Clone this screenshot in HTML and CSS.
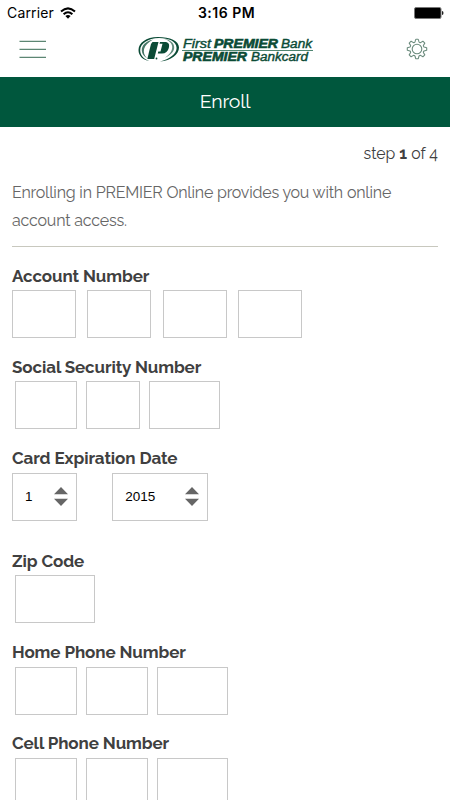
FILE: index.html
```html
<!DOCTYPE html>
<html lang="en">
<head>
<meta charset="utf-8">
<title>Enroll</title>
<link rel="stylesheet" href="styles.css">
</head>
<body>
<div class="status">
  <div class="carrier"><span class="carrier-name">Carrier</span>
    <svg width="16" height="12" viewBox="0 0 16 12"><g fill="none" stroke="#000" stroke-width="2"><path d="M1 4.600Q8-1.800 15 4.600M3.600 7.300Q8 3.200 12.400 7.300"/></g><path d="M5.400 9Q8 6.800 10.600 9L8 11.700z"/></svg>
  </div>
  <div class="time">3:16 PM</div>
  <svg class="battery" width="30" height="12" viewBox="0 0 30 12"><rect x=".5" y=".5" width="26.500" height="11" rx="1.500" fill="#000" stroke="#777"/><path d="M28 4q1.500 0 1.500 2T28 8z" fill="#222"/></svg>
</div>
<header class="header">
  <svg class="menu" width="28" height="18" viewBox="0 0 28 18"><path d="M.5 1.300h26.500M.5 9.300h26.500M.5 17.300h26.500" stroke="#5c8673" stroke-width="1.200"/></svg>
  <svg class="logo" width="176" height="28" viewBox="0 0 176 28">
    <g fill="#0b4b36">
      <path d="M20 1C8 1 .5 7 .5 14 .5 20 5 24 11.500 25 6 23 2.200 19.500 2.200 14.200 2.200 7.500 10 2 21 1.900 31 1.900 38.600 5.500 38.600 12 38.600 18 31.500 23 22 25.500 33 24.500 41 18.500 41 11.500 41 5 32 1 20 1z"/>
      <path d="M15 3.500C7.500 5.300 3.600 9.500 3.800 14.500c.2 3.500 2.200 6 5.200 7.800C3.500 16.500 5 9 15 3.500z" opacity=".75"/>
      <path d="M26 2.800c6 1 10 4 10.200 8.200.2 4.500-3.500 8-9.200 10.800 4.500-3.200 7.200-6.600 7.200-10.800 0-3.600-3-6.500-8.200-8.200z" opacity=".65"/>
      <path d="M14.500 6h6L16.200 23H9.300L13 8z"/>
      <path d="M22 6h4.500c4.500 0 5.200 2.600 4.300 6s-3.200 5.600-6.800 5.600h-4.200l.5-2h2.200l2-7.800h-3z"/>
      <circle cx="18.500" cy="22.500" r=".9"/>
    </g>
    <path d="M44 14.500h131" stroke="#4f8571" stroke-width="1"/>
    <g class="wordmark">
      <text x="45" y="11.800" textLength="28" lengthAdjust="spacingAndGlyphs">First</text>
      <text class="heavy" x="76" y="11.800" textLength="64" lengthAdjust="spacingAndGlyphs">PREMIER</text>
      <text x="143" y="11.800" textLength="31" lengthAdjust="spacingAndGlyphs">Bank</text>
      <text class="heavy" x="45" y="25" textLength="64" lengthAdjust="spacingAndGlyphs">PREMIER</text>
      <text x="113" y="25" textLength="57" lengthAdjust="spacingAndGlyphs">Bankcard</text>
    </g>
  </svg>
  <svg class="gear" width="22" height="22" viewBox="-11 -11 22 22"><g fill="none" stroke="#6b8b7d" stroke-width="1.100" stroke-linejoin="round"><path d="M-2-7Q-1.500-9.700-1.100-9.700H1.100Q1.500-9.700 2-7Q2.700-6.200 3.540-6.360L5.900-7.800 7.800-5.900 6.360-3.540Q6.200-2.700 7-2L9.700-1.300V1.300L7 2Q6.200 2.700 6.360 3.540L7.800 5.900 5.900 7.800 3.540 6.360Q2.700 6.200 2 7L1.300 9.700H-1.300L-2 7Q-2.700 6.200-3.540 6.360L-5.900 7.800-7.800 5.900-6.360 3.540Q-6.200 2.700-7 2L-9.700 1.300V-1.300L-7-2Q-6.200-2.700-6.360-3.540L-7.800-5.900-5.900-7.800-3.540-6.360Q-2.700-6.200-2-7z"/><circle r="4.800"/></g></svg>
</header>
<h1 class="title">Enroll</h1>
<main class="content">
  <p class="step">step <b>1</b> of 4</p>
  <p class="intro">Enrolling in PREMIER Online provides you with online<br>account access.</p>
  <form class="form">
    <div class="field"><div class="label">Account Number</div>
      <div class="boxes wide-gap"><input class="w64"><input class="w64"><input class="w64"><input class="w64"></div></div>
    <div class="field"><div class="label">Social Security Number</div>
      <div class="boxes inset"><input class="w62"><input class="w54"><input class="w71"></div></div>
    <div class="field expiry"><div class="label">Card Expiration Date</div>
      <div class="boxes select-gap">
        <div class="select month"><span>1</span><svg width="14" height="19" viewBox="0 0 14 19"><path d="M0 7.300L7 0l7 7.300zM0 11.700h14L7 19z" fill="#666"/></svg></div>
        <div class="select year"><span>2015</span><svg width="14" height="19" viewBox="0 0 14 19"><path d="M0 7.300L7 0l7 7.300zM0 11.700h14L7 19z" fill="#666"/></svg></div>
      </div></div>
    <div class="field"><div class="label">Zip Code</div>
      <div class="boxes inset"><input class="w80"></div></div>
    <div class="field"><div class="label">Home Phone Number</div>
      <div class="boxes inset"><input class="w62"><input class="w62"><input class="w71"></div></div>
    <div class="field"><div class="label">Cell Phone Number</div>
      <div class="boxes inset"><input class="w62"><input class="w62"><input class="w71"></div></div>
  </form>
</main>
</body>
</html>
```
FILE: styles.css
```css
* { box-sizing: border-box; }
body { margin: 0; height: 800px; overflow: hidden; background: #fff; color: #404040; font-family: Raleway, Lato, sans-serif; }
.status { height: 24px; padding: 1px 6px 0 7px; display: grid; grid-template-columns: 1fr auto 1fr; align-items: center; color: #000; font: 14px/24px Inter, sans-serif; }
.carrier { display: flex; align-items: center; gap: 6px; }
.carrier-name { letter-spacing: .15px; }
.time { font-weight: 600; letter-spacing: .5px; padding-left: 2px; }
.battery { justify-self: end; }
.header { height: 53px; padding: 0 22px 4px 19px; display: flex; align-items: center; justify-content: space-between; }
.logo { margin-right: 1px; margin-top: 3px; }
.wordmark { font: italic 12.500px "Liberation Sans", sans-serif; fill: #0b4b36; stroke: #0b4b36; stroke-width: .4px; }
.heavy { font-weight: bold; stroke-width: .6px; }
.title { height: 50px; margin: 0; background: #00573d; color: #fff; text-align: center; font-size: 19.500px; letter-spacing: -.2px; line-height: 50px; font-weight: 400; }
.content { padding: 0 12px; }
.step { margin: 0; padding-top: 14px; height: 52px; line-height: 26px; font-size: 15.800px; text-align: right; }
.step b { font-weight: 700; }
.intro { margin: 0; height: 68px; line-height: 28px; font-size: 16px; letter-spacing: -.2px; color: #666; border-bottom: 1px solid #c8c8be; }
.form { display: flex; flex-direction: column; gap: 17.150px; padding-top: 16px; }
.label { height: 27.300px; line-height: 27px; font-size: 17px; letter-spacing: -.1px; font-weight: 700; white-space: nowrap; }
.boxes { display: flex; height: 47.500px; gap: 9px; }
.wide-gap { gap: 11.250px; }
.inset { padding-left: 2.500px; }
.select-gap { gap: 35.300px; }
.field { height: 74px; }
.expiry { height: 85.700px; }
input, .select { height: 48px; border: 1px solid #c8c8c8; border-radius: 0; background: #fff; padding: 0; }
.w64 { width: 64px; }
.w62 { width: 62px; }
.w54 { width: 54px; }
.w71 { width: 71px; }
.w80 { width: 80px; }
.select { display: flex; align-items: center; justify-content: space-between; padding: 0 8px 0 12px; font: 13.500px "Liberation Sans", sans-serif; color: #000; }
.month { width: 65px; }
.year { width: 96px; }
```
